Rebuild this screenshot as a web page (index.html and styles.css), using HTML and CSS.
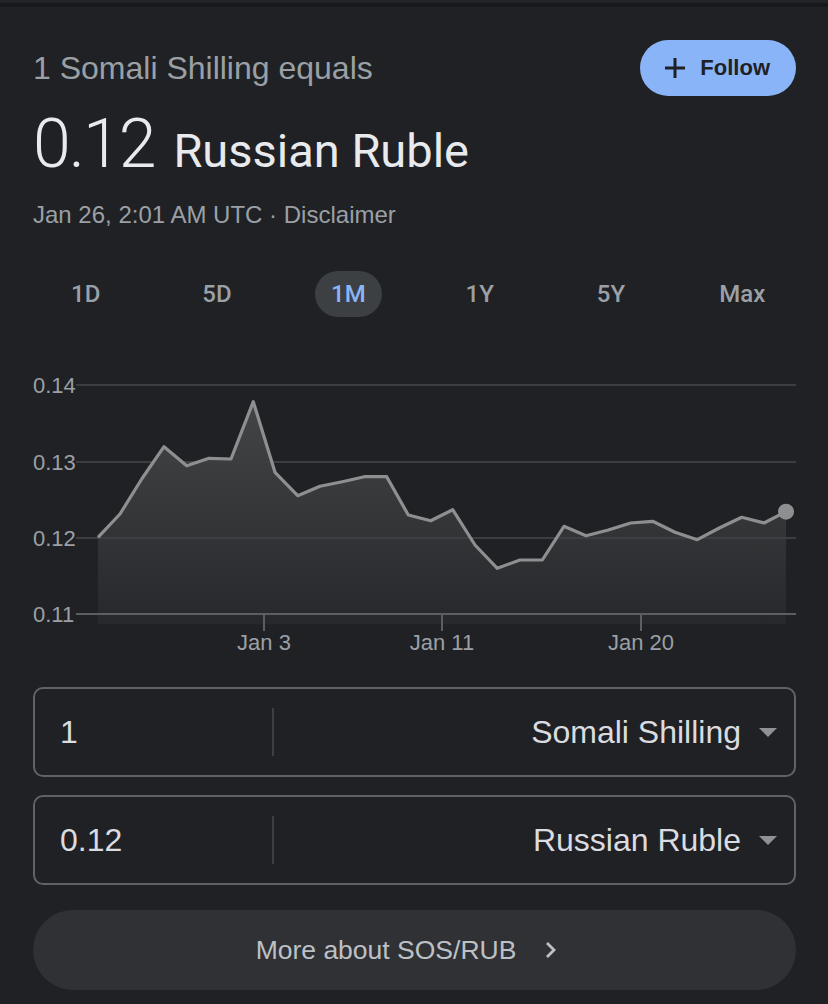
FILE: index.html
```html
<!DOCTYPE html>
<html lang="en">
<head>
<meta charset="utf-8">
<title>SOS to RUB</title>
<link rel="stylesheet" href="styles.css">
</head>
<body>
<div class="topbar"></div>
<main class="card">
  <section class="head">
    <div class="head-row">
      <div class="equals">1 Somali Shilling equals</div>
      <button class="follow">
        <svg class="plus" width="22" height="22" viewBox="0 0 22 22"><path d="M11 1v20M1 11h20" stroke="#202124" stroke-width="3" fill="none"/></svg>
        <span>Follow</span>
      </button>
    </div>
    <div class="rate"><span class="rate-num">0.12</span> <span class="rate-cur">Russian Ruble</span></div>
    <div class="stamp">Jan 26, 2:01 AM UTC · <span class="disclaimer">Disclaimer</span></div>
  </section>

  <nav class="tabs">
    <div class="tab"><span class="tab-label">1D</span></div>
    <div class="tab"><span class="tab-label">5D</span></div>
    <div class="tab"><span class="tab-label active">1M</span></div>
    <div class="tab"><span class="tab-label">1Y</span></div>
    <div class="tab"><span class="tab-label">5Y</span></div>
    <div class="tab"><span class="tab-label">Max</span></div>
  </nav>

  <section class="chart">
    <svg width="828" height="300" viewBox="0 0 828 300">
      <defs>
        <linearGradient id="fillg" x1="0" y1="40" x2="0" y2="265" gradientUnits="userSpaceOnUse">
          <stop offset="0" stop-color="#444547"/>
          <stop offset="1" stop-color="#27282b"/>
        </linearGradient>
      </defs>
      <polygon fill="url(#fillg)" points="98,265 98,178.3 120,155 141.7,120 164,87.7 186.7,106.7 209,99.3 231,100 253.3,42.7 275,113.3 297.7,136.7 320,127.3 342.3,122.7 364.3,117.7 386.7,117.7 408.3,156 430.7,161.7 452.7,150.7 475,186 497.3,209.3 520,201 542.3,201 564,167.3 586,176.7 608.3,171 630.7,164 652.7,162.3 675,173.3 697.3,180.7 719.3,169 741.7,158.3 764,164 786,152.7 786,265"/>
      <g class="grid">
        <line x1="76" y1="26" x2="796" y2="26"/>
        <line x1="76" y1="103" x2="796" y2="103"/>
        <line x1="76" y1="179" x2="796" y2="179"/>
      </g>
      <line class="axis" x1="76" y1="255" x2="796" y2="255"/>
      <g class="ticks">
        <line x1="264" y1="255" x2="264" y2="272"/>
        <line x1="442" y1="255" x2="442" y2="272"/>
        <line x1="641" y1="255" x2="641" y2="272"/>
      </g>
      <g class="ylabels">
        <text x="33" y="34">0.14</text>
        <text x="33" y="111">0.13</text>
        <text x="33" y="187">0.12</text>
        <text x="33" y="263">0.11</text>
      </g>
      <g class="xlabels">
        <text x="264" y="291">Jan 3</text>
        <text x="442" y="291">Jan 11</text>
        <text x="641" y="291">Jan 20</text>
      </g>
      <polyline class="line" points="98,178.3 120,155 141.7,120 164,87.7 186.7,106.7 209,99.3 231,100 253.3,42.7 275,113.3 297.7,136.7 320,127.3 342.3,122.7 364.3,117.7 386.7,117.7 408.3,156 430.7,161.7 452.7,150.7 475,186 497.3,209.3 520,201 542.3,201 564,167.3 586,176.7 608.3,171 630.7,164 652.7,162.3 675,173.3 697.3,180.7 719.3,169 741.7,158.3 764,164 786,152.7"/>
      <circle class="dot" cx="786" cy="152.7" r="8"/>
    </svg>
  </section>

  <section class="conv">
    <div class="box">
      <div class="amount">1</div>
      <div class="divider"></div>
      <div class="select">
        <span>Somali Shilling</span>
        <svg class="caret" width="18" height="9" viewBox="0 0 18 9"><polygon points="0,0 18,0 9,9" fill="#8e9195"/></svg>
      </div>
    </div>
    <div class="box">
      <div class="amount">0.12</div>
      <div class="divider"></div>
      <div class="select">
        <span>Russian Ruble</span>
        <svg class="caret" width="18" height="9" viewBox="0 0 18 9"><polygon points="0,0 18,0 9,9" fill="#8e9195"/></svg>
      </div>
    </div>
    <button class="more">
      <span>More about SOS/RUB</span>
      <svg class="chev" width="14" height="20" viewBox="0 0 14 20"><path d="M3 3l7 7-7 7" stroke="#bdc1c6" stroke-width="2.8" fill="none"/></svg>
    </button>
  </section>
</main>
</body>
</html>
```

FILE: styles.css
```css
* { box-sizing: border-box; }

html, body {
  margin: 0;
  padding: 0;
  background: #202124;
}

body {
  width: 828px;
  height: 1004px;
  overflow: hidden;
  font-family: "Liberation Sans", Arial, sans-serif;
  color: #e8eaed;
}

.topbar {
  height: 7px;
  border-top: 3px solid #232427;
  background: #18191c;
}

.head {
  padding: 33px 32px 0 33px;
}

.head-row {
  display: flex;
  align-items: center;
  justify-content: space-between;
}

.equals {
  font-size: 32px;
  line-height: 37px;
  color: #9aa0a6;
}

.follow {
  display: flex;
  align-items: center;
  gap: 14px;
  height: 56px;
  padding: 0 26px 0 24px;
  border: none;
  border-radius: 28px;
  background: #8ab4f8;
  color: #202124;
  font-family: "Liberation Sans", Arial, sans-serif;
  font-size: 22px;
  font-weight: 700;
}

.plus { display: block; }

.rate {
  margin-top: 14px;
  line-height: 68px;
  font-family: Roboto, "Liberation Sans", sans-serif;
  color: #e8eaed;
  white-space: nowrap;
}

.rate-num {
  font-size: 68px;
  font-weight: 300;
  letter-spacing: -2px;
  margin-right: 15px;
}

.rate-cur {
  font-size: 47px;
  font-weight: 400;
}

.stamp {
  margin-top: 5px;
  font-size: 24px;
  line-height: 28px;
  color: #9aa0a6;
}

.tabs {
  margin-top: 42px;
  padding: 0 20px;
  display: grid;
  grid-template-columns: repeat(6, 1fr);
}

.tab {
  display: flex;
  justify-content: center;
}

.tab-label {
  display: inline-flex;
  align-items: center;
  height: 46px;
  padding: 0 16px;
  border-radius: 23px;
  font-family: Roboto, "Liberation Sans", sans-serif;
  font-size: 24px;
  font-weight: 500;
  color: #9aa0a6;
}

.tab-label.active {
  background: #3c4043;
  color: #8ab4f8;
}

.chart {
  margin-top: 42px;
  height: 300px;
}

.chart svg { display: block; }

.grid line {
  stroke: #3c3e42;
  stroke-width: 2;
}

.axis {
  stroke: #5b5e62;
  stroke-width: 2;
}

.ticks line {
  stroke: #5b5e62;
  stroke-width: 2;
}

.ylabels text,
.xlabels text {
  font-family: "Liberation Sans", Arial, sans-serif;
  font-size: 22px;
  fill: #9aa0a6;
}

.xlabels text { text-anchor: middle; }

.line {
  fill: none;
  stroke: #8e8f91;
  stroke-width: 3.2;
  stroke-linejoin: round;
}

.dot { fill: #8e8f91; }

.conv {
  margin-top: 28px;
  padding: 0 32px 0 33px;
  display: flex;
  flex-direction: column;
}

.box {
  display: flex;
  align-items: center;
  height: 90px;
  border: 2px solid #5f6368;
  border-radius: 10px;
  margin-bottom: 18px;
  font-size: 32px;
  color: #dadce0;
}

.box + .box { margin-bottom: 25px; }

.amount {
  width: 237px;
  padding-left: 25px;
}

.divider {
  width: 2px;
  height: 48px;
  background: #3c4043;
}

.select {
  flex: 1;
  display: flex;
  align-items: center;
  justify-content: flex-end;
  gap: 18px;
  padding-right: 17px;
}

.caret { display: block; }

.more {
  display: flex;
  align-items: center;
  justify-content: center;
  gap: 28px;
  height: 80px;
  padding: 0 15px 0 0;
  border: none;
  border-radius: 40px;
  background: #303134;
  color: #bdc1c6;
  font-family: "Liberation Sans", Arial, sans-serif;
  font-size: 26.5px;
}

.chev { display: block; }
```
